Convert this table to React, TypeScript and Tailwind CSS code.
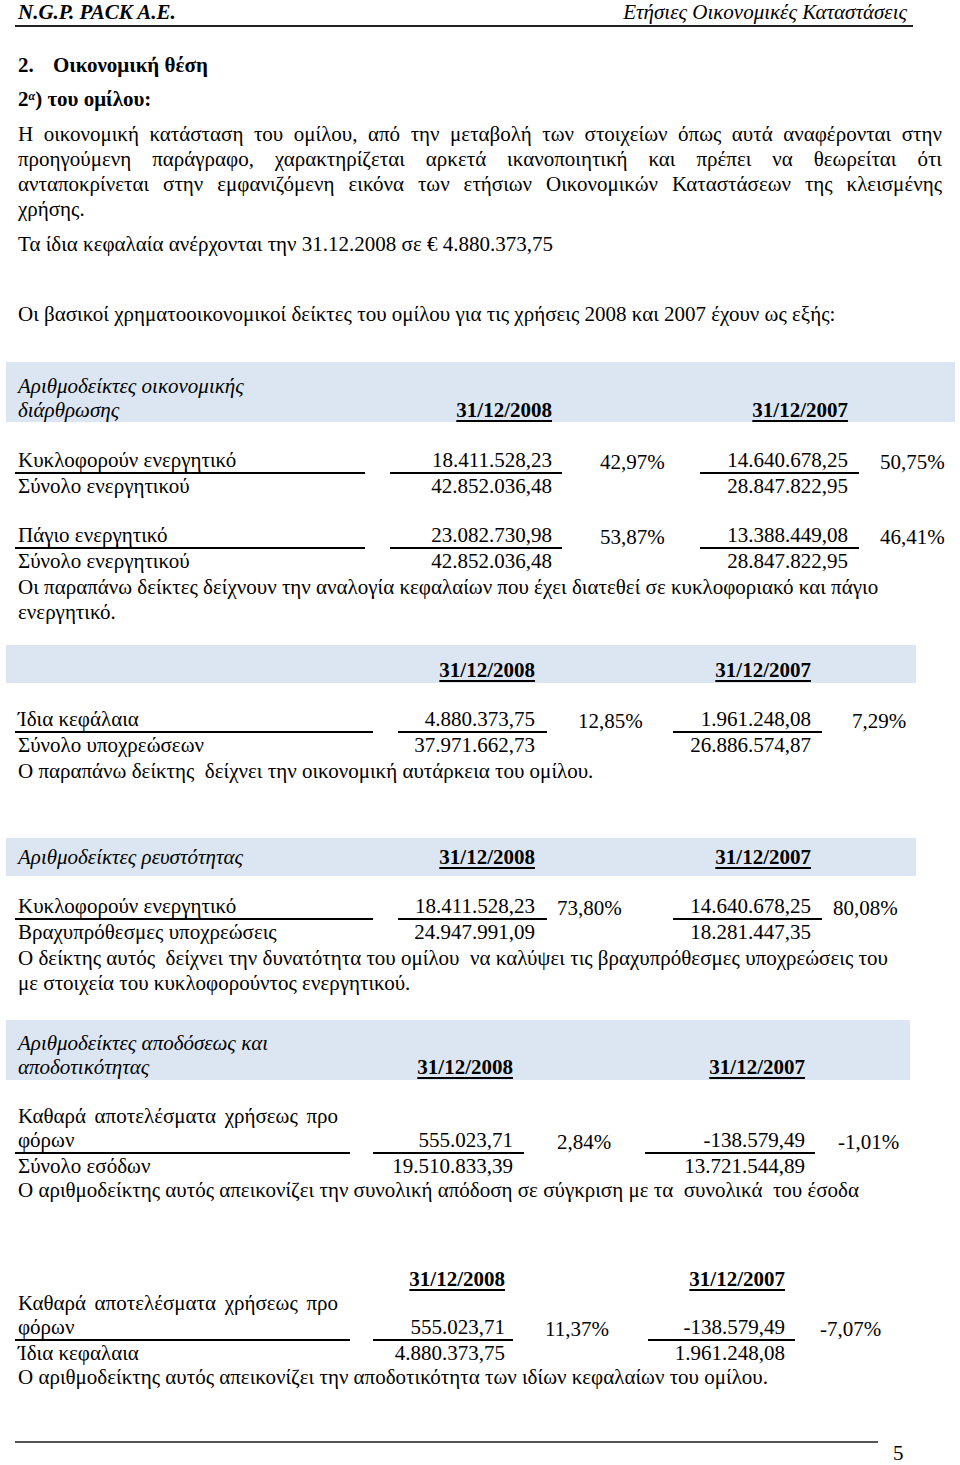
import React from "react";

type Cfg = {
  cols: string;
  n1: string;
  p1: string;
  n2: string;
  p2: string;
};

const s1: Cfg = { cols: "grid-cols-[350px_25px_172px_138px_159px_1fr]", n1: "pr-[10px]", p1: "pl-[38px]", n2: "pr-[11px]", p2: "pl-[21px]" };
const s2: Cfg = { cols: "grid-cols-[358px_25px_149px_126px_149px_1fr]", n1: "pr-[12px]", p1: "pl-[31px]", n2: "pr-[11px]", p2: "pl-[30px]" };
const s3: Cfg = { cols: "grid-cols-[358px_25px_149px_126px_149px_1fr]", n1: "pr-[12px]", p1: "pl-[10px]", n2: "pr-[11px]", p2: "pl-[11px]" };
const s4: Cfg = { cols: "grid-cols-[335px_23px_151px_121px_170px_1fr]", n1: "pr-[11px]", p1: "pl-[33px]", n2: "pr-[10px]", p2: "pl-[23px]" };
const s5: Cfg = { cols: "grid-cols-[335px_23px_140px_135px_147px_1fr]", n1: "pr-[8px]", p1: "pl-[32px]", n2: "pr-[10px]", p2: "pl-[25px]" };

const date = "font-bold underline decoration-2 underline-offset-[3px]";

function Row({ cfg, label, v1, p1, v2, p2, rule }: { cfg: Cfg; label: React.ReactNode; v1: string; p1?: string; v2: string; p2?: string; rule?: boolean }) {
  const b = rule ? "border-b-2 border-black" : "";
  return (
    <div className={`grid ${cfg.cols} items-end leading-[24px]`}>
      <div className={`pl-[3px] ${b}`}>{label}</div>
      <div />
      <div className={`text-right ${cfg.n1} ${b}`}>{v1}</div>
      <div className={cfg.p1}>{p1}</div>
      <div className={`text-right ${cfg.n2} ${b}`}>{v2}</div>
      <div className={cfg.p2}>{p2}</div>
    </div>
  );
}

function Dates({ cfg, label }: { cfg: Cfg; label?: React.ReactNode }) {
  return (
    <div className={`grid ${cfg.cols} items-end leading-[24px]`}>
      <div className="pl-[3px] italic">{label}</div>
      <div />
      <div className={`text-right ${cfg.n1}`}><span className={date}>31/12/2008</span></div>
      <div />
      <div className={`text-right ${cfg.n2}`}><span className={date}>31/12/2007</span></div>
      <div />
    </div>
  );
}

const twoLine = (a: string, b: string) => (
  <>
    <span className="block pr-[12px] [text-align-last:justify]">{a}</span>
    <span className="block">{b}</span>
  </>
);

export default function App() {
  return (
    <div className="w-[960px] h-[1465px] overflow-hidden bg-white text-black text-[21px] font-['Liberation_Serif','Times_New_Roman',serif]">
      <div className="pl-[15px]">
        {/* header */}
        <div className="w-[898px] flex justify-between border-b-2 border-[#222] leading-[25px] pl-[3px] pr-[6px]">
          <span className="font-bold italic">N.G.P. PACK A.E.</span>
          <span className="italic">Ετήσιες Οικονομικές Καταστάσεις</span>
        </div>

        <div className="mt-[26px] pl-[3px] leading-[24px] font-bold">
          <span className="inline-block w-[35px]">2.</span>Οικονομική θέση
        </div>
        <div className="mt-[10px] pl-[3px] leading-[24px] font-bold">
          2<sup className="text-[12px] italic">α</sup>) του ομίλου:
        </div>

        <div className="mt-[11px] ml-[3px] w-[924px] leading-[25px] text-justify">
          <span className="block [text-align-last:justify]">Η οικονομική κατάσταση του ομίλου, από την μεταβολή των στοιχείων όπως αυτά αναφέρονται στην</span>
          <span className="block [text-align-last:justify]">προηγούμενη παράγραφο, χαρακτηρίζεται αρκετά ικανοποιητική και πρέπει να θεωρείται ότι</span>
          <span className="block [text-align-last:justify]">ανταποκρίνεται στην εμφανιζόμενη εικόνα των ετήσιων Οικονομικών Καταστάσεων της κλεισμένης</span>
          <span className="block">χρήσης.</span>
        </div>
        <p className="mt-[10px] pl-[3px] leading-[25px]">Τα ίδια κεφαλαία ανέρχονται την 31.12.2008 σε € 4.880.373,75</p>
        <p className="mt-[45px] pl-[3px] leading-[25px]">Οι βασικοί χρηματοοικονομικοί δείκτες του ομίλου για τις χρήσεις 2008 και 2007 έχουν ως εξής:</p>

        {/* section 1 */}
        <div className="mt-[35px] -ml-[9px] w-[949px] h-[60px] pl-[9px] pt-[12px] bg-[#dce6f2]">
          <Dates cfg={s1} label={<><span className="block">Αριθμοδείκτες οικονομικής</span><span className="block">διάρθρωσης</span></>} />
        </div>
        <div className="mt-[26px]">
          <Row cfg={s1} rule label="Κυκλοφορούν ενεργητικό" v1="18.411.528,23" p1="42,97%" v2="14.640.678,25" p2="50,75%" />
          <Row cfg={s1} label="Σύνολο ενεργητικού" v1="42.852.036,48" v2="28.847.822,95" />
        </div>
        <div className="mt-[25px]">
          <Row cfg={s1} rule label="Πάγιο ενεργητικό" v1="23.082.730,98" p1="53,87%" v2="13.388.449,08" p2="46,41%" />
          <Row cfg={s1} label="Σύνολο ενεργητικού" v1="42.852.036,48" v2="28.847.822,95" />
        </div>
        <p className="mt-[2px] pl-[3px] leading-[25px]">
          Οι παραπάνω δείκτες δείχνουν την αναλογία κεφαλαίων που έχει διατεθεί σε κυκλοφοριακό και πάγιο
          <br />
          ενεργητικό.
        </p>

        {/* section 2 */}
        <div className="mt-[20px] -ml-[9px] w-[910px] h-[38px] pl-[9px] pt-[13px] bg-[#dce6f2]">
          <Dates cfg={s2} />
        </div>
        <div className="mt-[24px]">
          <Row cfg={s2} rule label="Ίδια κεφάλαια" v1="4.880.373,75" p1="12,85%" v2="1.961.248,08" p2="7,29%" />
          <Row cfg={s2} label="Σύνολο υποχρεώσεων" v1="37.971.662,73" v2="26.886.574,87" />
        </div>
        <p className="mt-[2px] pl-[3px] leading-[25px] whitespace-pre-wrap">Ο παραπάνω δείκτης  δείχνει την οικονομική αυτάρκεια του ομίλου.</p>

        {/* section 3 */}
        <div className="mt-[54px] -ml-[9px] w-[910px] h-[38px] pl-[9px] pt-[7px] bg-[#dce6f2]">
          <Dates cfg={s3} label="Αριθμοδείκτες ρευστότητας" />
        </div>
        <div className="mt-[18px]">
          <Row cfg={s3} rule label="Κυκλοφορούν ενεργητικό" v1="18.411.528,23" p1="73,80%" v2="14.640.678,25" p2="80,08%" />
          <Row cfg={s3} label="Βραχυπρόθεσμες υποχρεώσεις" v1="24.947.991,09" v2="18.281.447,35" />
        </div>
        <p className="mt-[2px] pl-[3px] leading-[25px] whitespace-pre-wrap">
          {"Ο δείκτης αυτός  δείχνει την δυνατότητα του ομίλου  να καλύψει τις βραχυπρόθεσμες υποχρεώσεις του"}
          <br />
          με στοιχεία του κυκλοφορούντος ενεργητικού.
        </p>

        {/* section 4 */}
        <div className="mt-[24px] -ml-[9px] w-[904px] h-[60px] pl-[9px] pt-[11px] bg-[#dce6f2]">
          <Dates cfg={s4} label={<><span className="block">Αριθμοδείκτες αποδόσεως και</span><span className="block">αποδοτικότητας</span></>} />
        </div>
        <div className="mt-[24px]">
          <Row cfg={s4} rule label={twoLine("Καθαρά αποτελέσματα χρήσεως προ", "φόρων")} v1="555.023,71" p1="2,84%" v2="-138.579,49" p2="-1,01%" />
          <Row cfg={s4} label="Σύνολο εσόδων" v1="19.510.833,39" v2="13.721.544,89" />
        </div>
        <p className="mt-[0px] pl-[3px] leading-[25px] whitespace-pre-wrap">Ο αριθμοδείκτης αυτός απεικονίζει την συνολική απόδοση σε σύγκριση με τα  συνολικά  του έσοδα</p>

        {/* section 5 */}
        <div className="mt-[64px]">
          <Dates cfg={s5} />
          <Row cfg={s5} rule label={twoLine("Καθαρά αποτελέσματα χρήσεως προ", "φόρων")} v1="555.023,71" p1="11,37%" v2="-138.579,49" p2="-7,07%" />
          <Row cfg={s5} label="Ίδια κεφαλαια" v1="4.880.373,75" v2="1.961.248,08" />
        </div>
        <p className="mt-[0px] pl-[3px] leading-[25px]">Ο αριθμοδείκτης αυτός απεικονίζει την αποδοτικότητα των ιδίων κεφαλαίων του ομίλου.</p>

        {/* footer */}
        <div className="mt-[51px] w-[863px] border-t-2 border-[#555]" />
        <div className="ml-[878px] leading-[20px]">5</div>
      </div>
    </div>
  );
}
